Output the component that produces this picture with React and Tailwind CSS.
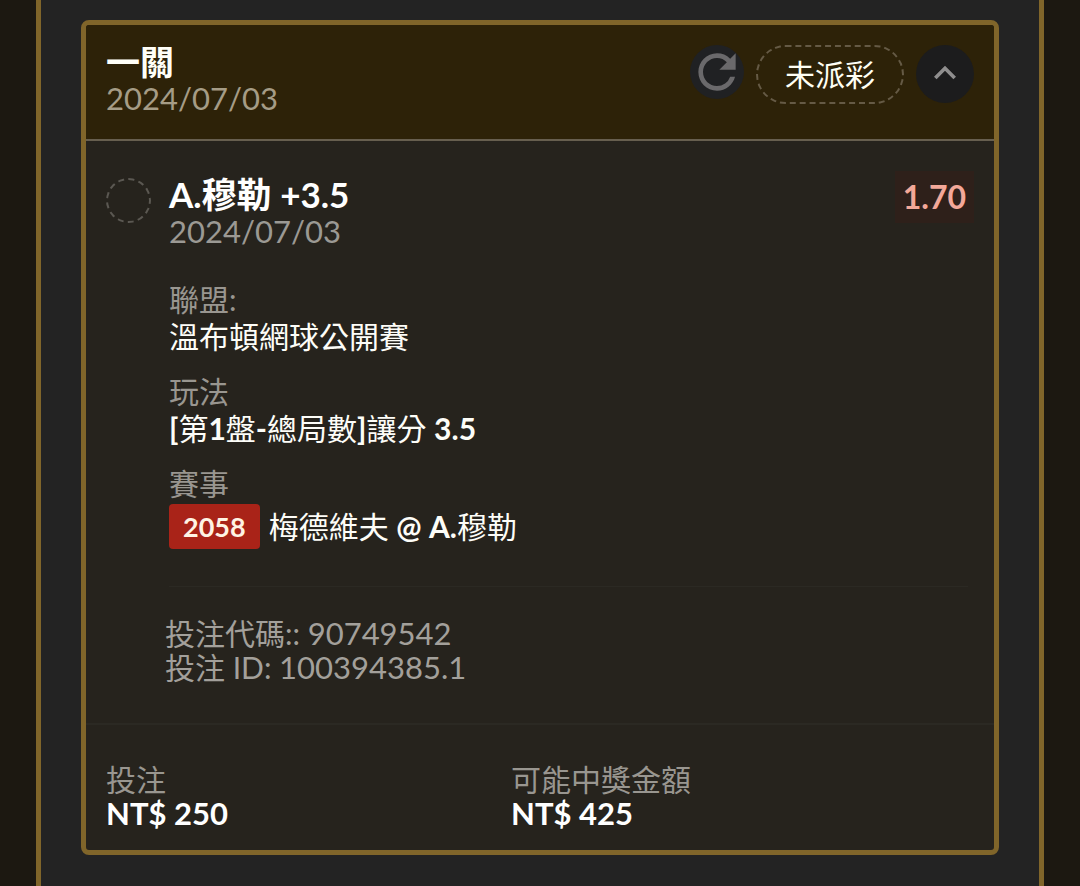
import { MdKeyboardArrowUp, MdRefresh } from 'react-icons/md';

function Detail({ label, children }) {
  return (
    <div>
      <dt className="text-[#999690]">{label}</dt>
      <dd className="text-[#fdfdf8]">{children}</dd>
    </div>
  );
}

function Amount({ label, value }) {
  return (
    <div>
      <dt className="text-[30px] text-[#999690]">{label}</dt>
      <dd className="text-[31px] font-bold text-white">{value}</dd>
    </div>
  );
}

function BetHeader() {
  return (
    <header className="flex items-start justify-between border-b-2 border-[#675f4f] bg-[#2d2208] px-5 pt-[18px] pb-[20px]">
      <div className="leading-[37px]">
        <h1 className="text-[34px] font-bold text-[#fffff8]">一關</h1>
        <time dateTime="2024-07-03" className="block text-[31px] text-[#a59c86]">2024/07/03</time>
      </div>
      <div className="flex items-start gap-3 pt-[2px] pb-[15px]">
        <button type="button" aria-label="重新整理" className="flex size-[54px] items-center justify-center rounded-full bg-[#202123] text-[#6a696b]">
          <MdRefresh className="size-[56px] shrink-0" />
        </button>
        <span className="flex h-[59px] items-center rounded-full border-2 border-dashed border-[#655a45] px-[27px] text-[30px] text-[#fffff4]">未派彩</span>
        <button type="button" aria-label="收合" className="flex size-[58px] items-center justify-center rounded-full bg-[#1c1c1d] pb-[2px] text-[#8f8e8e]">
          <MdKeyboardArrowUp className="size-[44px] shrink-0" />
        </button>
      </div>
    </header>
  );
}

function BetSelection() {
  return (
    <section className="flex items-start gap-[18px] px-5 pt-[30px] pb-[39px]">
      <span className="mt-[7px] size-[45px] shrink-0 rounded-full border-2 border-dashed border-[#5b5852]" />
      <div className="min-w-0 flex-1">
        <div className="flex items-start justify-between">
          <div className="pt-[5px] leading-[37px]">
            <h2 className="text-[35px] font-bold text-white">A.穆勒 +3.5</h2>
            <time dateTime="2024-07-03" className="block text-[31px] text-[#9b9994]">2024/07/03</time>
          </div>
          <span className="flex h-[52px] items-center bg-[#2e201a] px-2 text-[32px] font-bold text-[#f3a899]">1.70</span>
        </div>
        <dl className="mt-[31px] flex flex-col gap-[18px] text-[30px] leading-[37px]">
          <Detail label="聯盟:">溫布頓網球公開賽</Detail>
          <Detail label="玩法">
            <b>[</b>第<b>1</b>盤<b>-</b>總局數<b>]</b>讓分 <b>3.5</b>
          </Detail>
          <Detail label="賽事">
            <span className="flex h-12 items-center gap-[9px]">
              <span className="flex h-[45px] items-center rounded-[4px] bg-[#a92318] px-[14px] text-[27px] font-bold text-[#fff3e4]">2058</span>
              <span>梅德維夫 <b>@ A.</b>穆勒</span>
            </span>
          </Detail>
        </dl>
        <div className="mt-[36px] mr-[6px] border-t border-[#2b2923]" />
        <div className="-ml-1 pt-[29px] text-[30px] leading-[34px] text-[#a3a09b]">
          <p>投注代碼:: <span className="text-[31px]">90749542</span></p>
          <p>投注 ID: <span className="text-[31px]">100394385.1</span></p>
        </div>
      </div>
    </section>
  );
}

export default function App() {
  return (
    <div className="min-h-screen bg-[#1c1811] px-9 font-[Lato,'Noto_Sans_CJK_TC',sans-serif]" lang="zh-Hant">
      <main className="min-h-screen border-x-[5px] border-[#80652a] bg-[#232323] px-10 pt-5 pb-[31px]">
        <article className="overflow-hidden rounded-lg border-[5px] border-[#80652a] bg-[#26231d]">
          <BetHeader />
          <BetSelection />
          <dl className="grid grid-cols-[7fr_8fr] border-t-2 border-[#2b2923] px-5 pt-[37px] pb-[20px] leading-[34px]">
            <Amount label="投注" value="NT$ 250" />
            <Amount label="可能中獎金額" value="NT$ 425" />
          </dl>
        </article>
      </main>
    </div>
  );
}
